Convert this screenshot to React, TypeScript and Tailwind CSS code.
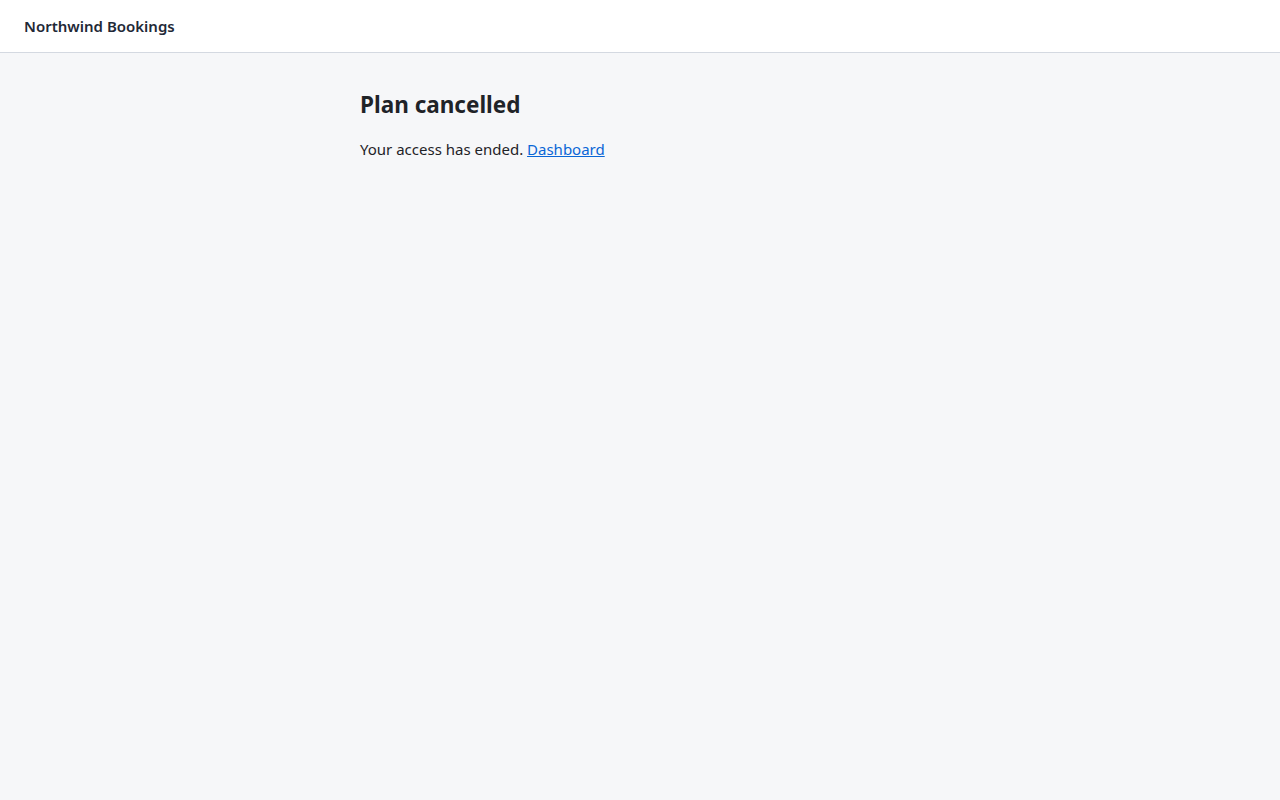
import React from "react";

export default function App() {
  return (
    <div className="min-h-screen bg-[#f6f7f9] text-[#1f2328]" style={{ fontFamily: '"Noto Sans", sans-serif' }}>
      <header className="flex h-[53px] items-center border-b border-[#d4d9e1] bg-white px-6">
        <span className="text-[15px] font-semibold text-[#1f2937]">Northwind Bookings</span>
      </header>
      <main className="mx-auto max-w-[560px] pt-[37px]">
        <h1 className="text-[22.5px] font-bold leading-[30px]">Plan cancelled</h1>
        <p className="mt-[18px] text-[15px] leading-[22px]">
          Your access has ended.{" "}
          <a href="#" className="text-[#0a66d6] underline">
            Dashboard
          </a>
        </p>
      </main>
    </div>
  );
}
